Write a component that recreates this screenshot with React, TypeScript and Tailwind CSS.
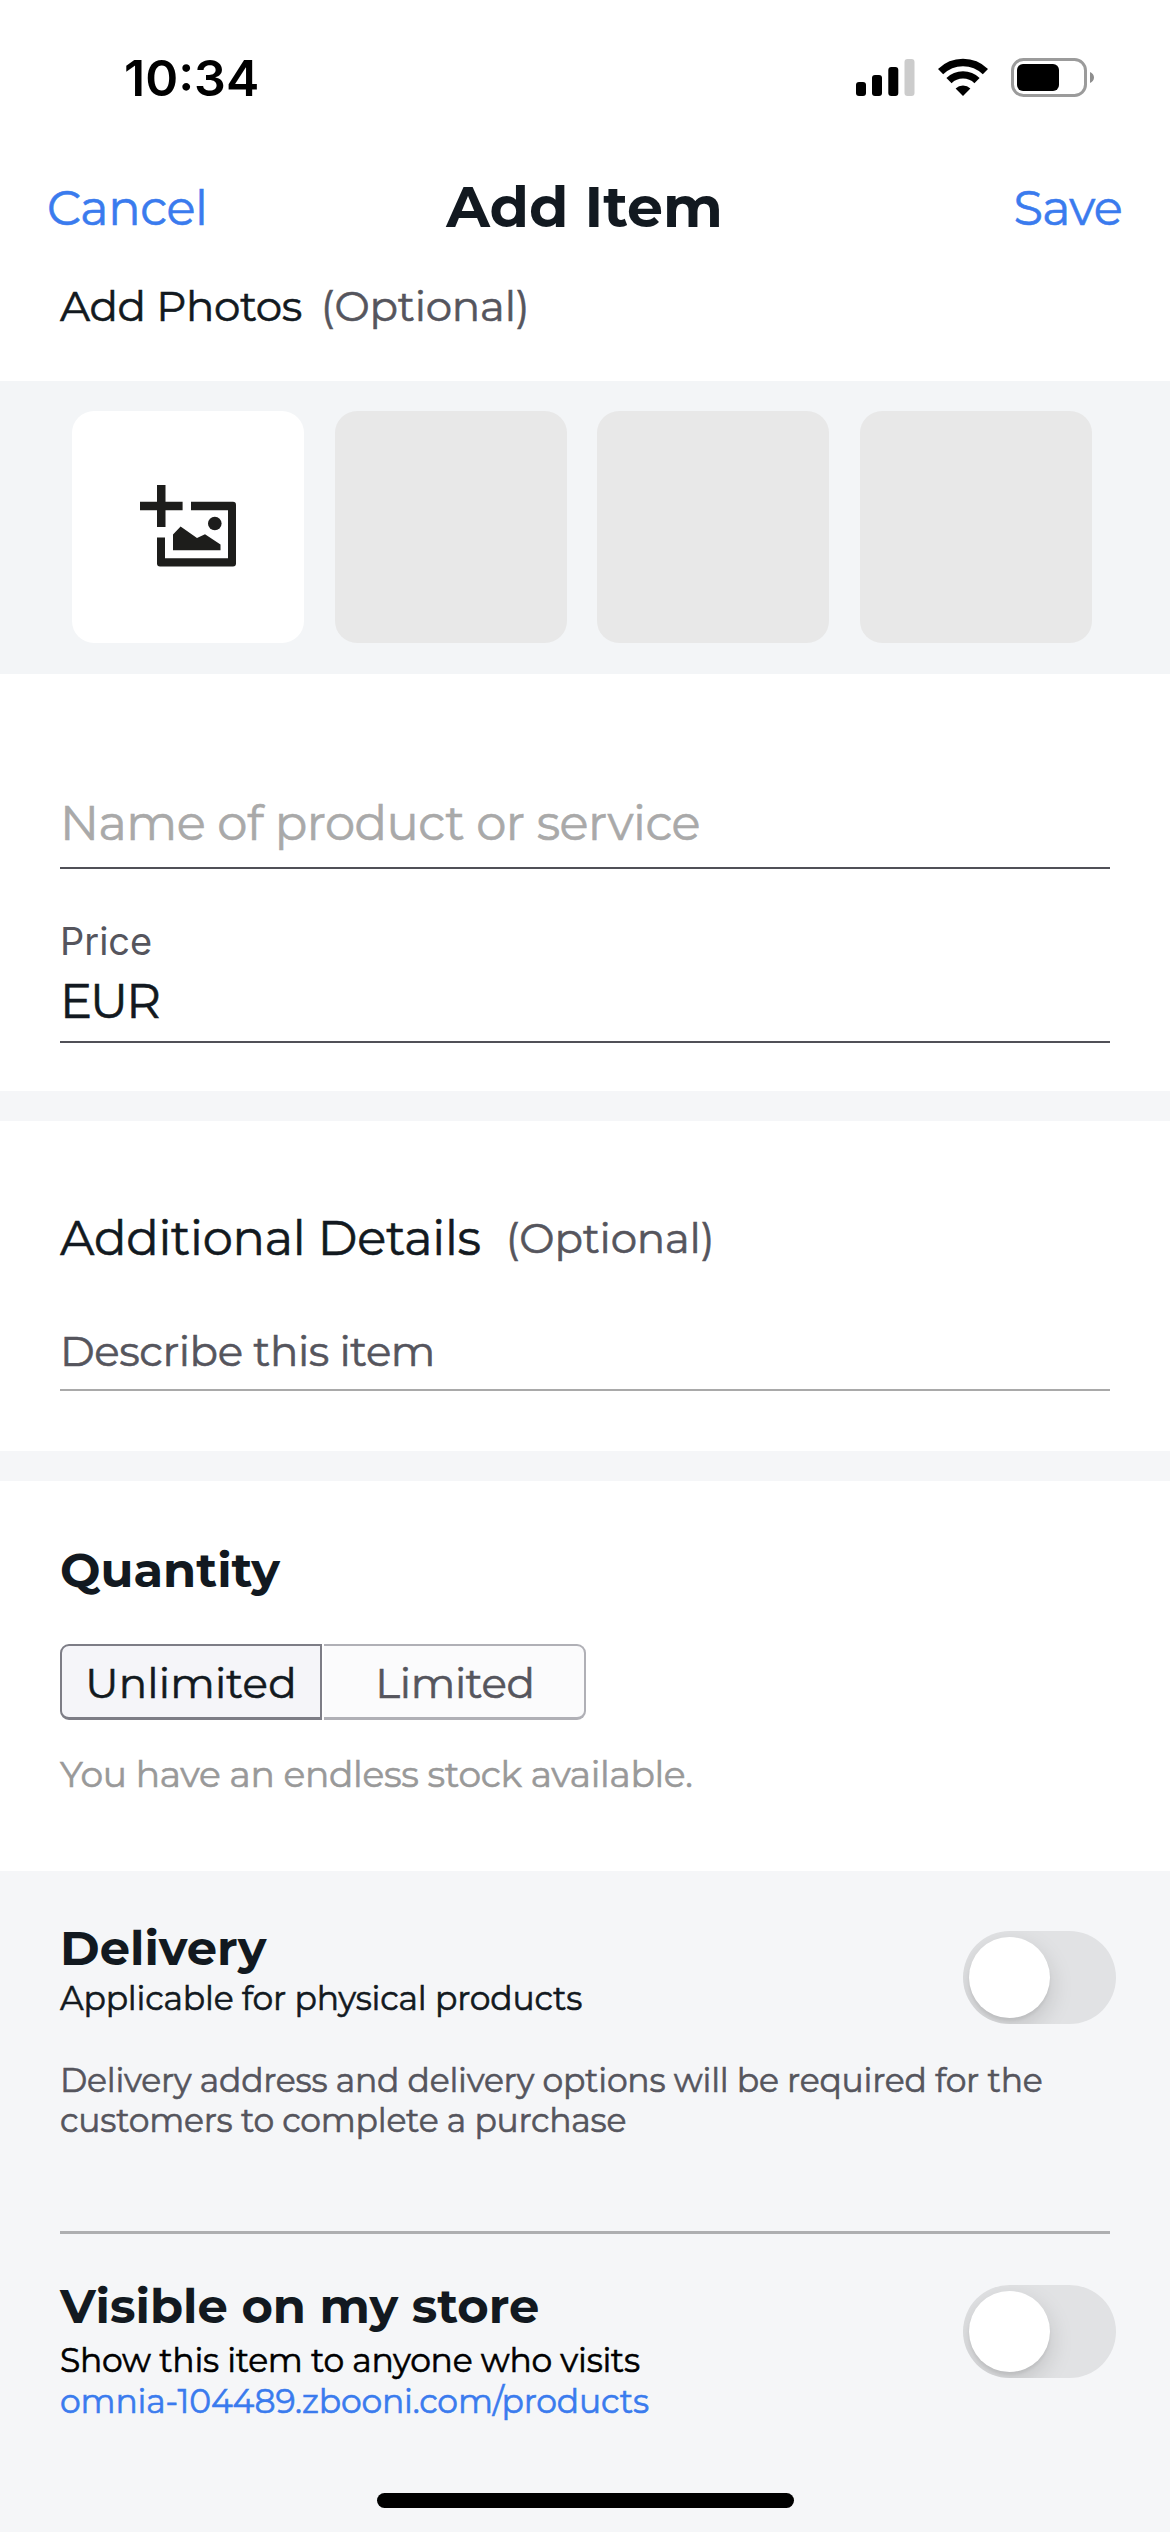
function StatusBar() {
  return (
    <div className="flex h-[160px] items-start justify-between pl-[124px] pr-[76px] [-webkit-text-stroke:0px]">
      <span className="mt-12 font-[Inter,sans-serif] text-[50px] leading-[60px] font-semibold text-black">10:34</span>
      <div className="mt-[58px] flex items-start">
        <svg width="59" height="39" viewBox="0 0 59 39" fill="#000">
          <rect x="0" y="24" width="10" height="14" rx="3" />
          <rect x="16" y="17" width="10" height="21" rx="3" />
          <rect x="32.3" y="9" width="10" height="29" rx="3" />
          <rect x="48.5" y="1" width="10" height="37" rx="3" fill="#cccccc" />
        </svg>
        <svg className="ml-[22px]" width="52" height="39" viewBox="0 0 52 39" fill="none" stroke="#000">
          <path d="M3.6 13.6 A32 32 0 0 1 48.4 13.6" strokeWidth="7.4" />
          <path d="M12 22.6 A20 20 0 0 1 40 22.6" strokeWidth="7.4" />
          <path d="M26 38 L18.6 30.4 A10.7 10.7 0 0 1 33.4 30.4 Z" fill="#000" stroke="none" />
        </svg>
        <svg className="ml-[22px]" width="83" height="39" viewBox="0 0 83 39">
          <rect x="1.5" y="1.5" width="73" height="36" rx="11" fill="none" stroke="#9b9b9b" strokeWidth="3" />
          <rect x="6" y="6" width="42" height="27" rx="6" fill="#000" />
          <path d="M79 14 C81.5 15 83 17 83 19.5 C83 22 81.5 24 79 25 Z" fill="#8e8e8e" />
        </svg>
      </div>
    </div>
  );
}

function AddPhotoIcon() {
  return (
    <svg width="96" height="82" viewBox="0 0 96 82" fill="#1d1d1b">
      <path d="M17 0 H25.5 V16.7 H42.6 V25.3 H25.5 V42 H17 V25.3 H0 V16.7 H17 Z" />
      <path d="M51 16.7 H93 Q96 16.7 96 20 V78.5 Q96 81.5 93 81.5 H20 Q17 81.5 17 78.5 V52.5 H25 V73.2 H88 V25.3 H51 Z" />
      <circle cx="74.8" cy="38.5" r="6.8" />
      <path d="M33 49.4 L40.6 41.5 L57 53 L65 49.2 L80.5 59.4 V65.2 H33 Z" />
    </svg>
  );
}

function Toggle() {
  return (
    <button
      type="button"
      role="switch"
      aria-checked="false"
      className="-mr-1.5 h-[93px] w-[153px] shrink-0 overflow-hidden rounded-full bg-[#e1e2e4] p-1.5"
    >
      <span className="block size-[81px] rounded-full bg-white shadow-[0_9px_24px_rgba(0,0,0,0.15),0_3px_3px_rgba(0,0,0,0.06)]" />
    </button>
  );
}

function Band() {
  return <div className="h-[30px] bg-[#f5f6f8]" />;
}

export default function App() {
  return (
    <div className="min-h-[2532px] w-[1170px] overflow-hidden bg-white font-[Montserrat,Inter,sans-serif] text-[#121920] [-webkit-text-stroke:0.6px]">
      <StatusBar />

      <header className="mt-[17px] grid grid-cols-3 items-start pr-[48px] pl-[47px] text-[48px] leading-[60px]">
        <button type="button" className="mt-px justify-self-start tracking-[-0.4px] text-[#3a7bee]">Cancel</button>
        <h1 className="justify-self-center text-[57px] font-bold whitespace-nowrap [-webkit-text-stroke:0px]">Add Item</h1>
        <button type="button" className="mt-px justify-self-end tracking-[-0.8px] text-[#3a7bee]">Save</button>
      </header>

      <div className="mt-[43px] flex gap-[19px] px-[60px] text-[42px] leading-[50px]">
        <span className="tracking-[-0.4px]">Add Photos</span>
        <span className="tracking-[-0.2px] text-[#55555d]">(Optional)</span>
      </div>

      <div className="mt-[50px] flex h-[293px] gap-[30.6px] bg-[#f3f5f7] pt-[30px] pl-[72px]">
        <div className="flex size-[232px] items-start rounded-[22px] bg-white pt-[74px] pl-[68px]">
          <AddPhotoIcon />
        </div>
        <div className="size-[232px] rounded-[22px] bg-[#e8e8e8]" />
        <div className="size-[232px] rounded-[22px] bg-[#e8e8e8]" />
        <div className="size-[232px] rounded-[22px] bg-[#e8e8e8]" />
      </div>

      <section className="h-[417px] px-[60px] pt-[119px]">
        <div className="h-[76px] border-b-2 border-[#505057] text-[48px] leading-[60px] tracking-[-0.5px] text-[#a9a9a9]">
          Name of product or service
        </div>
        <div className="mt-[49px] font-[Inter,sans-serif] text-[38px] leading-[46px] text-[#55555d] [-webkit-text-stroke:0px]">Price</div>
        <div className="mt-[7px] h-[72px] border-b-2 border-[#505057] text-[48px] leading-[60px] tracking-[-2px]">EUR</div>
      </section>

      <Band />

      <section className="h-[330px] px-[60px] pt-[87px]">
        <div className="flex gap-[25px] leading-[60px]">
          <span className="text-[48px] tracking-[-0.25px]">Additional Details</span>
          <span className="text-[42px] tracking-[-0.2px] text-[#55555d]">(Optional)</span>
        </div>
        <div className="mt-[58px] h-[65px] border-b-2 border-[#a9a9a9] text-[42px] leading-[50px] tracking-[-0.4px] text-[#55555d]">
          Describe this item
        </div>
      </section>

      <Band />

      <section className="h-[390px] px-[60px] pt-[59px]">
        <h2 className="text-[48px] leading-[60px] font-bold [-webkit-text-stroke:0px]">Quantity</h2>
        <div className="mt-11 flex h-[76px] gap-0.5 text-[42px] leading-[74px]">
          <button type="button" className="w-[262px] rounded-l-[9px] border-2 border-b-[3px] border-[#7d7d86] bg-[#f5f5f9] tracking-[0.2px]">
            Unlimited
          </button>
          <button type="button" className="w-[262px] rounded-r-[9px] border-2 border-b-[3px] border-l-0 border-[#b0b0b6] bg-[#fbfbfc] pl-0.5 tracking-[-0.3px] text-[#55555d]">
            Limited
          </button>
        </div>
        <p className="mt-8 text-[36px] leading-[44px] tracking-[-0.31px] text-[#999999]">You have an endless stock available.</p>
      </section>

      <section className="relative h-[661px] bg-[#f5f6f8] px-[60px] pt-[47px] text-[33px]">
        <div className="flex h-[142px] justify-between">
          <div>
            <h2 className="text-[48px] leading-[60px] font-bold [-webkit-text-stroke:0px]">Delivery</h2>
            <p className="leading-[40px] tracking-[-0.2px]">Applicable for physical products</p>
          </div>
          <div className="pt-[13px]">
            <Toggle />
          </div>
        </div>
        <p className="h-[171px] leading-[40px] tracking-[-0.23px] text-[#55555d]">
          Delivery address and delivery options will be required for the
          <br />
          customers to complete a purchase
        </p>
        <div className="h-[3px] bg-[#aeafb1]" />
        <div className="mt-[42px] flex justify-between">
          <div>
            <h2 className="text-[48px] leading-[60px] font-bold [-webkit-text-stroke:0px]">Visible on my store</h2>
            <p className="mt-1 leading-[41px] tracking-[-0.25px] text-black">Show this item to anyone who visits</p>
            <a className="block leading-[41px] tracking-[-0.15px] text-[#3a7bee]">omnia-104489.zbooni.com/products</a>
          </div>
          <div className="pt-[9px]">
            <Toggle />
          </div>
        </div>
        <div className="absolute bottom-6 left-[377px] h-[15px] w-[417px] rounded-full bg-black" />
      </section>
    </div>
  );
}
